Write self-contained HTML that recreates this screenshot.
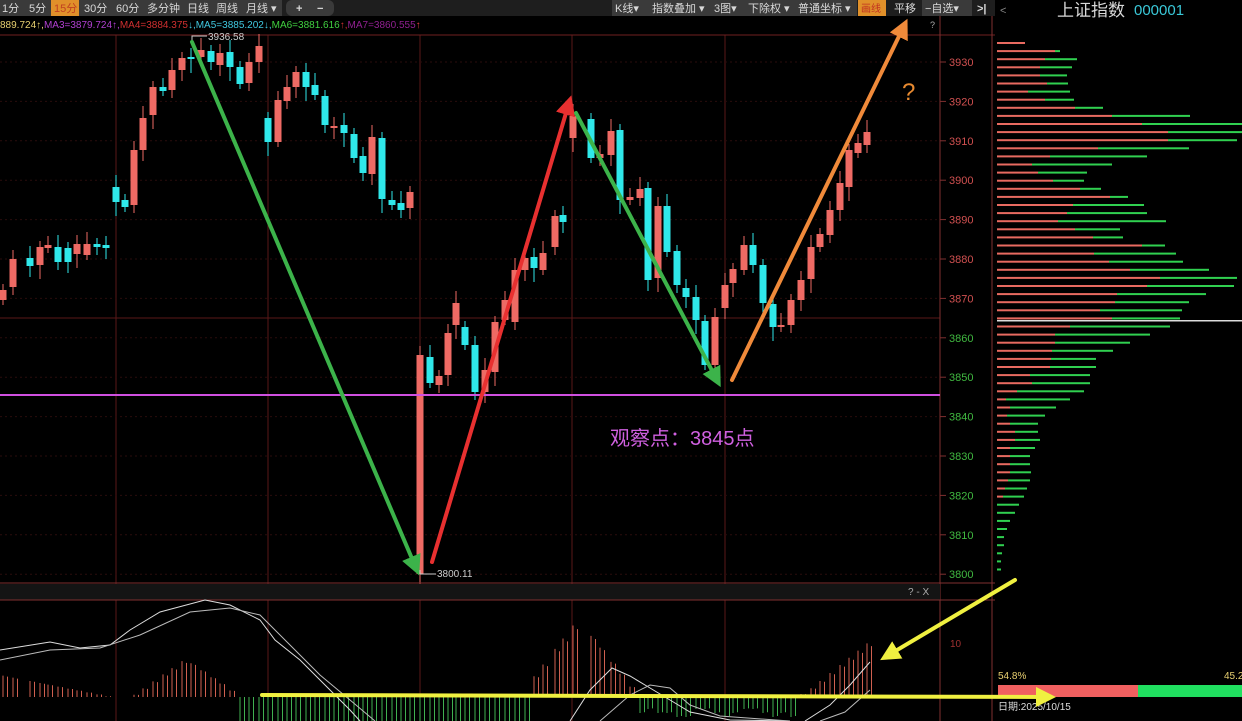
<!DOCTYPE html>
<html><head><meta charset="utf-8"><style>
body{margin:0;background:#000;width:1242px;height:721px;overflow:hidden;font-family:"Liberation Sans","Noto Sans CJK SC",sans-serif}
svg{position:absolute;left:0;top:0}
</style></head><body>
<svg id="s" width="1242" height="721" xmlns="http://www.w3.org/2000/svg" font-family="Liberation Sans, Noto Sans CJK SC, sans-serif">
<rect width="1242" height="721" fill="#000"/>
<!-- toolbar -->
<rect x="0" y="0" width="995" height="16" fill="#1e1e1e"/>
<rect x="0" y="0" width="282" height="16" fill="#3a3a3a"/>
<rect x="286" y="0" width="48" height="16" rx="6" fill="#3a3a3a"/>
<rect x="612" y="0" width="245" height="16" fill="#3a3a3a"/>
<rect x="922" y="0" width="50" height="16" fill="#3a3a3a"/>
<rect x="51" y="0" width="28" height="16" fill="#e0902a"/>
<rect x="858" y="0" width="28" height="16" fill="#e0902a"/>
<g font-size="11" fill="#d8d8d8">
<text x="2" y="12">1分</text><text x="29" y="12">5分</text>
<text x="54" y="12" fill="#c04020">15分</text>
<text x="84" y="12">30分</text><text x="116" y="12">60分</text><text x="147" y="12">多分钟</text>
<text x="187" y="12">日线</text><text x="216" y="12">周线</text><text x="246" y="12">月线 ▾</text>
<text x="296" y="12" font-weight="bold">+</text><text x="317" y="12" font-weight="bold">−</text>
<text x="615" y="12">K线▾</text><text x="652" y="12">指数叠加 ▾</text><text x="714" y="12">3图▾</text>
<text x="748" y="12">下除权 ▾</text><text x="798" y="12">普通坐标 ▾</text>
<text x="861" y="12" fill="#c03020" font-size="10">画线</text>
<text x="894" y="12">平移</text><text x="925" y="12">−自选▾</text>
<text x="977" y="12" font-weight="bold">&gt;|</text>
</g>
<g font-size="11">
<text x="1000" y="14" fill="#888">&lt;</text>
<text x="1057" y="16" fill="#d8d8d8" font-size="17">上证指数</text>
<text x="1134" y="15" fill="#3ac8d8" font-size="15">000001</text>
</g>
<!-- MA line -->
<text x="0" y="28" font-size="10"><tspan fill="#e8d070">889.724↑,</tspan><tspan fill="#b040d0">MA3=3879.724↑,</tspan><tspan fill="#d03030">MA4=3884.375</tspan><tspan fill="#40c8e0">↓,MA5=3885.202↓,</tspan><tspan fill="#40d040">MA6=3881.616</tspan><tspan fill="#d03030">↑,</tspan><tspan fill="#902090">MA7=3860.555</tspan><tspan fill="#e04040">↑</tspan></text>
<g id="grid"></g>
<line x1="0" y1="35" x2="995" y2="35" stroke="#702020"/>
<line x1="0" y1="318" x2="940" y2="318" stroke="#5a1818"/>
<line x1="940" y1="16" x2="940" y2="721" stroke="#803030"/>
<line x1="992" y1="16" x2="992" y2="721" stroke="#803030"/>
<text x="930" y="28" fill="#aaa" font-size="9">?</text>
<g id="cand"></g>
<g id="prof"></g>
<g id="axis" font-size="11"></g>
<line x1="0" y1="395" x2="940" y2="395" stroke="#d050e0" stroke-width="2"/>
<text x="610" y="445" fill="#d060e0" font-size="20">观察点：3845点</text>
<polyline points="192,42 192,36 207,36" fill="none" stroke="#ccc"/>
<text x="208" y="40" fill="#ccc" font-size="10">3936.58</text>
<polyline points="420,570 420,574 436,574" fill="none" stroke="#ccc"/>
<text x="437" y="577" fill="#ccc" font-size="10">3800.11</text>
<!-- MACD panel -->
<rect x="0" y="584" width="940" height="16" fill="#141414"/>
<line x1="0" y1="583" x2="995" y2="583" stroke="#803030"/>
<line x1="0" y1="600" x2="995" y2="600" stroke="#803030"/>
<text x="908" y="595" fill="#aaa" font-size="10">? - X</text>
<text x="950" y="647" fill="#a03030" font-size="10">10</text>
<g id="macd"></g>
<polyline fill="none" stroke="#ddd" stroke-width="1" points="0,650 50,642 80,648 110,645 130,630 160,612 205,600 230,605 260,620 275,640 300,660 330,690 350,710 360,721"/>
<polyline fill="none" stroke="#bbb" stroke-width="1" points="0,660 50,650 100,648 140,635 190,612 230,608 260,615 290,645 320,675 350,700 375,721"/>
<polyline fill="none" stroke="#ddd" stroke-width="1" points="570,721 590,690 612,668 630,676 650,688 670,700 690,712 730,720 790,721"/>
<polyline fill="none" stroke="#bbb" stroke-width="1" points="600,721 630,695 650,685 670,688 690,705 720,716 790,721"/>
<polyline fill="none" stroke="#ddd" stroke-width="1" points="805,721 830,705 850,685 870,662"/>
<polyline fill="none" stroke="#bbb" stroke-width="1" points="820,721 845,712 870,690"/>
<text x="998" y="679" fill="#e8d070" font-size="10">54.8%</text>
<text x="1224" y="679" fill="#e8d070" font-size="10">45.2</text>
<rect x="998" y="685" width="140" height="12" fill="#f06060"/>
<rect x="1138" y="685" width="104" height="12" fill="#20e060"/>
<text x="998" y="710" fill="#ddd" font-size="10">日期:2025/10/15</text>
<defs>
<marker id="mg" markerWidth="5" markerHeight="5" refX="3" refY="2.5" orient="auto" markerUnits="strokeWidth"><path d="M0,0 L5,2.5 L0,5z" fill="#3cb34a"/></marker>
<marker id="mr" markerWidth="5" markerHeight="5" refX="3" refY="2.5" orient="auto" markerUnits="strokeWidth"><path d="M0,0 L5,2.5 L0,5z" fill="#e83030"/></marker>
<marker id="mo" markerWidth="5" markerHeight="5" refX="3" refY="2.5" orient="auto" markerUnits="strokeWidth"><path d="M0,0 L5,2.5 L0,5z" fill="#f08a3a"/></marker>
<marker id="my" markerWidth="5" markerHeight="5" refX="3" refY="2.5" orient="auto" markerUnits="strokeWidth"><path d="M0,0 L5,2.5 L0,5z" fill="#f0f040"/></marker>
</defs>
<g stroke-width="4" stroke-linecap="round">
<line x1="192" y1="42" x2="416" y2="568" stroke="#3cb34a" marker-end="url(#mg)"/>
<line x1="432" y1="562" x2="569" y2="103" stroke="#e83030" marker-end="url(#mr)"/>
<line x1="576" y1="113" x2="717" y2="380" stroke="#3cb34a" marker-end="url(#mg)"/>
<line x1="732" y1="380" x2="904" y2="26" stroke="#f08a3a" marker-end="url(#mo)"/>
<line x1="262" y1="695" x2="1048" y2="697" stroke="#f0f040" marker-end="url(#my)"/>
<line x1="1015" y1="580" x2="887" y2="656" stroke="#f0f040" marker-end="url(#my)"/>
</g>
<text x="902" y="100" fill="#e88a30" font-size="24">?</text>
</svg>
<script>
var NS="http://www.w3.org/2000/svg";
function el(p,t,a){var e=document.createElementNS(NS,t);for(var k in a)e.setAttribute(k,a[k]);document.getElementById(p).appendChild(e);return e;}
[116,268,420,572,725].forEach(function(x){el("grid","line",{x1:x,y1:35,x2:x,y2:721,stroke:"#5a1818"});});
for(var p=3930;p>=3800;p-=10){var y=62+(3930-p)*3.94;el("grid","line",{x1:0,y1:y,x2:940,y2:y,stroke:"#2a0c0c","stroke-dasharray":"2,3"});
 var t=el("axis","text",{x:949,y:y+4,fill:p>3865?"#d05050":"#40b840"});t.textContent=p;el("axis","line",{x1:940,y1:y,x2:946,y2:y,stroke:"#803030"});}
var C=[[3,290,300,'r'],[13,259,287,'r'],[30,258,266,'c'],[40,247,265,'r'],[48,245,248,'r'],[58,247,262,'c'],[68,248,262,'c'],[77,244,254,'r'],[87,244,255,'r'],[97,244,247,'c'],[106,245,248,'c'],[116,187,202,'c'],[125,200,207,'c'],[134,150,205,'r'],[143,118,150,'r'],[153,87,115,'r'],[163,87,91,'c'],[172,70,90,'r'],[182,58,70,'r'],[191,57,59,'c'],[201,50,57,'r'],[211,51,62,'c'],[220,53,65,'r'],[230,52,67,'c'],[240,67,84,'c'],[249,62,83,'r'],[259,46,62,'r'],[268,118,142,'c'],[278,100,142,'r'],[287,87,101,'r'],[296,72,87,'r'],[306,72,87,'c'],[315,85,95,'c'],[325,96,125,'c'],[334,126,128,'r'],[344,125,133,'c'],[354,134,158,'c'],[363,156,173,'c'],[372,137,174,'r'],[382,138,199,'c'],[392,200,205,'c'],[401,203,210,'c'],[410,192,208,'r'],
[420,355,574,'r'],[430,357,383,'c'],[439,376,385,'r'],[448,333,375,'r'],[456,303,325,'r'],[465,327,345,'c'],[475,345,392,'c'],[485,370,392,'r'],[495,322,372,'r'],[505,300,320,'r'],[515,270,322,'r'],[525,258,270,'r'],[534,257,268,'c'],[543,253,270,'r'],[555,216,247,'r'],[563,215,222,'c'],[573,116,138,'r'],[591,119,158,'c'],[600,154,158,'r'],[611,131,155,'r'],[620,130,200,'c'],[630,197,200,'r'],[640,189,198,'r'],[648,188,280,'c'],[658,206,278,'r'],[667,206,252,'c'],[677,251,285,'c'],[686,288,297,'c'],[696,297,320,'c'],[705,321,365,'c'],[715,317,365,'r'],[725,285,308,'r'],[733,269,283,'r'],[744,245,270,'r'],[753,245,265,'c'],[763,265,303,'c'],[773,304,327,'c'],[781,325,327,'r'],[791,300,325,'r'],[801,280,300,'r'],[811,247,279,'r'],[820,234,247,'r'],[830,210,235,'r'],[840,183,210,'r'],[849,150,187,'r'],[858,143,153,'r'],[867,132,145,'r']];
C.forEach(function(c,i){var col=c[3]=='r'?"#ee6a64":"#2fe8ea";var wt=c[1]-6-(i%3)*3,wb=c[2]+5+(i%4)*3;
 el("cand","line",{x1:c[0],y1:wt,x2:c[0],y2:wb,stroke:col,"stroke-width":1});
 el("cand","rect",{x:c[0]-3.5,y:c[1],width:7,height:Math.max(2,c[2]-c[1]),fill:col});});
var P=[[1025,1025],[1060,1055],[1077,1045],[1072,1040],[1067,1040],[1068,1047],[1070,1028],[1074,1045],[1103,1075],[1190,1112],[1242,1142],[1242,1168],[1237,1168],[1189,1098],[1147,1050],[1112,1032],[1087,1038],[1084,1053],[1101,1080],[1128,1110],[1144,1073],[1147,1067],[1166,1058],[1120,1075],[1123,1093],[1165,1142],[1176,1094],[1183,1109],[1209,1130],[1237,1160],[1234,1147],[1206,1117],[1189,1115],[1182,1100],[1180,1112],[1170,1070],[1150,1055],[1130,1055],[1113,1052],[1096,1051],[1096,1050],[1090,1030],[1090,1032],[1084,1017],[1070,1006],[1056,1010],[1045,1007],[1038,1010],[1038,1015],[1040,1015],[1035,1010],[1030,1010],[1030,1010],[1031,1010],[1030,1008],[1027,1005],[1024,1003],[1019,997],[1015,997],[1010,997],[1007,997],[1004,997],[1004,997],[1002,997],[1001,997],[1001,997]];
P.forEach(function(b,i){var y=42+i*8.1;el("prof","rect",{x:997,y:y,width:b[1]-997,height:2,fill:"#e86a60"});if(b[0]>b[1])el("prof","rect",{x:b[1],y:y,width:b[0]-b[1],height:2,fill:"#30d050"});});
el("prof","rect",{x:997,y:320,width:245,height:1.5,fill:"#ddd"});
C.forEach(function(c){var x=c[0],h;
 if(x<110)h=(110-x)*0.2;else if(x<240)h=Math.max(0,38-Math.abs(x-185)*0.7);else if(x<530)h=-30;else if(x<635)h=Math.max(2,78-Math.abs(x-578)*1.3);else if(x<800)h=-(12+(x%3)*4);else h=Math.max(3,(x-800)*0.8);
 var y0=697;el("macd","line",{x1:x,y1:y0,x2:x,y2:y0-h,stroke:h>0?"#d06050":"#40b050","stroke-width":1});
 el("macd","line",{x1:x+4.5,y1:y0,x2:x+4.5,y2:y0-h*0.95,stroke:h>0?"#d06050":"#40b050","stroke-width":1});});
</script>
</body></html>
